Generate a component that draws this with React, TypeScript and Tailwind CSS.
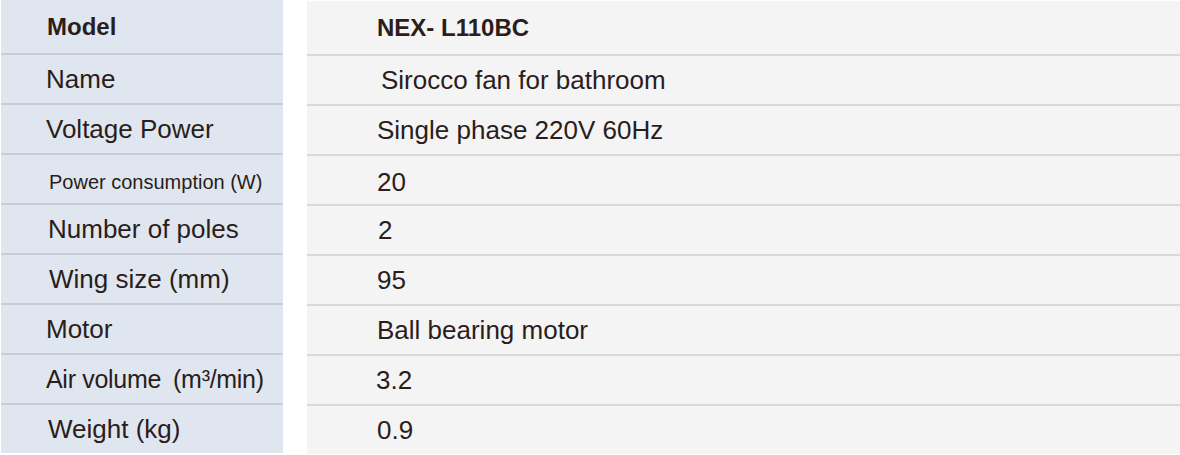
import React from "react";

const rows: { label: React.ReactNode; value: string; lp: string; rp: string; small?: boolean; bold?: boolean; shift?: boolean }[] = [
  { label: "Model", value: "NEX- L110BC", lp: "pl-[46px]", rp: "pl-[70px]", bold: true },
  { label: "Name", value: "Sirocco fan for bathroom", lp: "pl-[45px]", rp: "pl-[74px]" },
  { label: "Voltage Power", value: "Single phase 220V 60Hz", lp: "pl-[45px]", rp: "pl-[70px]" },
  { label: "Power consumption (W)", value: "20", lp: "pl-[48px]", rp: "pl-[70px]", small: true, shift: true },
  { label: "Number of poles", value: "2", lp: "pl-[47px]", rp: "pl-[71px]" },
  { label: "Wing size (mm)", value: "95", lp: "pl-[48px]", rp: "pl-[70px]" },
  { label: "Motor", value: "Ball bearing motor", lp: "pl-[45px]", rp: "pl-[70px]" },
  {
    label: (
      <span className="text-[25px] tracking-[-0.3px]">
        Air volume<span className="ml-[12px]">(m³/min)</span>
      </span>
    ),
    value: "3.2",
    lp: "pl-[45px]",
    rp: "pl-[69px]",
  },
  { label: "Weight (kg)", value: "0.9", lp: "pl-[47px]", rp: "pl-[70px]" },
];

export default function App() {
  return (
    <div
      className="flex h-[455px] w-[1180px] bg-white text-[#2a1d1b]"
      style={{ fontFamily: '"Liberation Sans", Arial, sans-serif' }}
    >
      <div className="ml-[1px] flex h-[453px] w-[282px] flex-col bg-[#dfe6ef]">
        {rows.map((r, i) => (
          <div
            key={i}
            className={`flex items-center ${r.lp} ${r.shift ? "pt-[5px]" : ""} ${i === 0 ? "h-[55px]" : "h-[50px]"} ${
              i < rows.length - 1 ? "border-b-2 border-[#c6cdd6]" : ""
            } ${i === rows.length - 1 ? "flex-1" : ""}`}
          >
            <span
              className={`whitespace-pre leading-none ${
                r.bold ? "text-[24px] font-bold" : r.small ? "text-[20px]" : "text-[26px]"
              }`}
            >
              {r.label}
            </span>
          </div>
        ))}
      </div>
      <div className="ml-[24px] mt-[1px] flex h-[453px] flex-1 flex-col bg-[#f4f4f4]">
        {rows.map((r, i) => (
          <div
            key={i}
            className={`flex items-center ${r.rp} ${r.shift ? "pt-[3px]" : ""} ${i === 0 ? "h-[55px]" : "h-[50px]"} ${
              i < rows.length - 1 ? "border-b-2 border-[#d9d9d9]" : ""
            } ${i === rows.length - 1 ? "flex-1" : ""}`}
          >
            <span className={`whitespace-pre leading-none ${r.bold ? "text-[24px] font-bold" : "text-[26px]"}`}>
              {r.value}
            </span>
          </div>
        ))}
      </div>
    </div>
  );
}
